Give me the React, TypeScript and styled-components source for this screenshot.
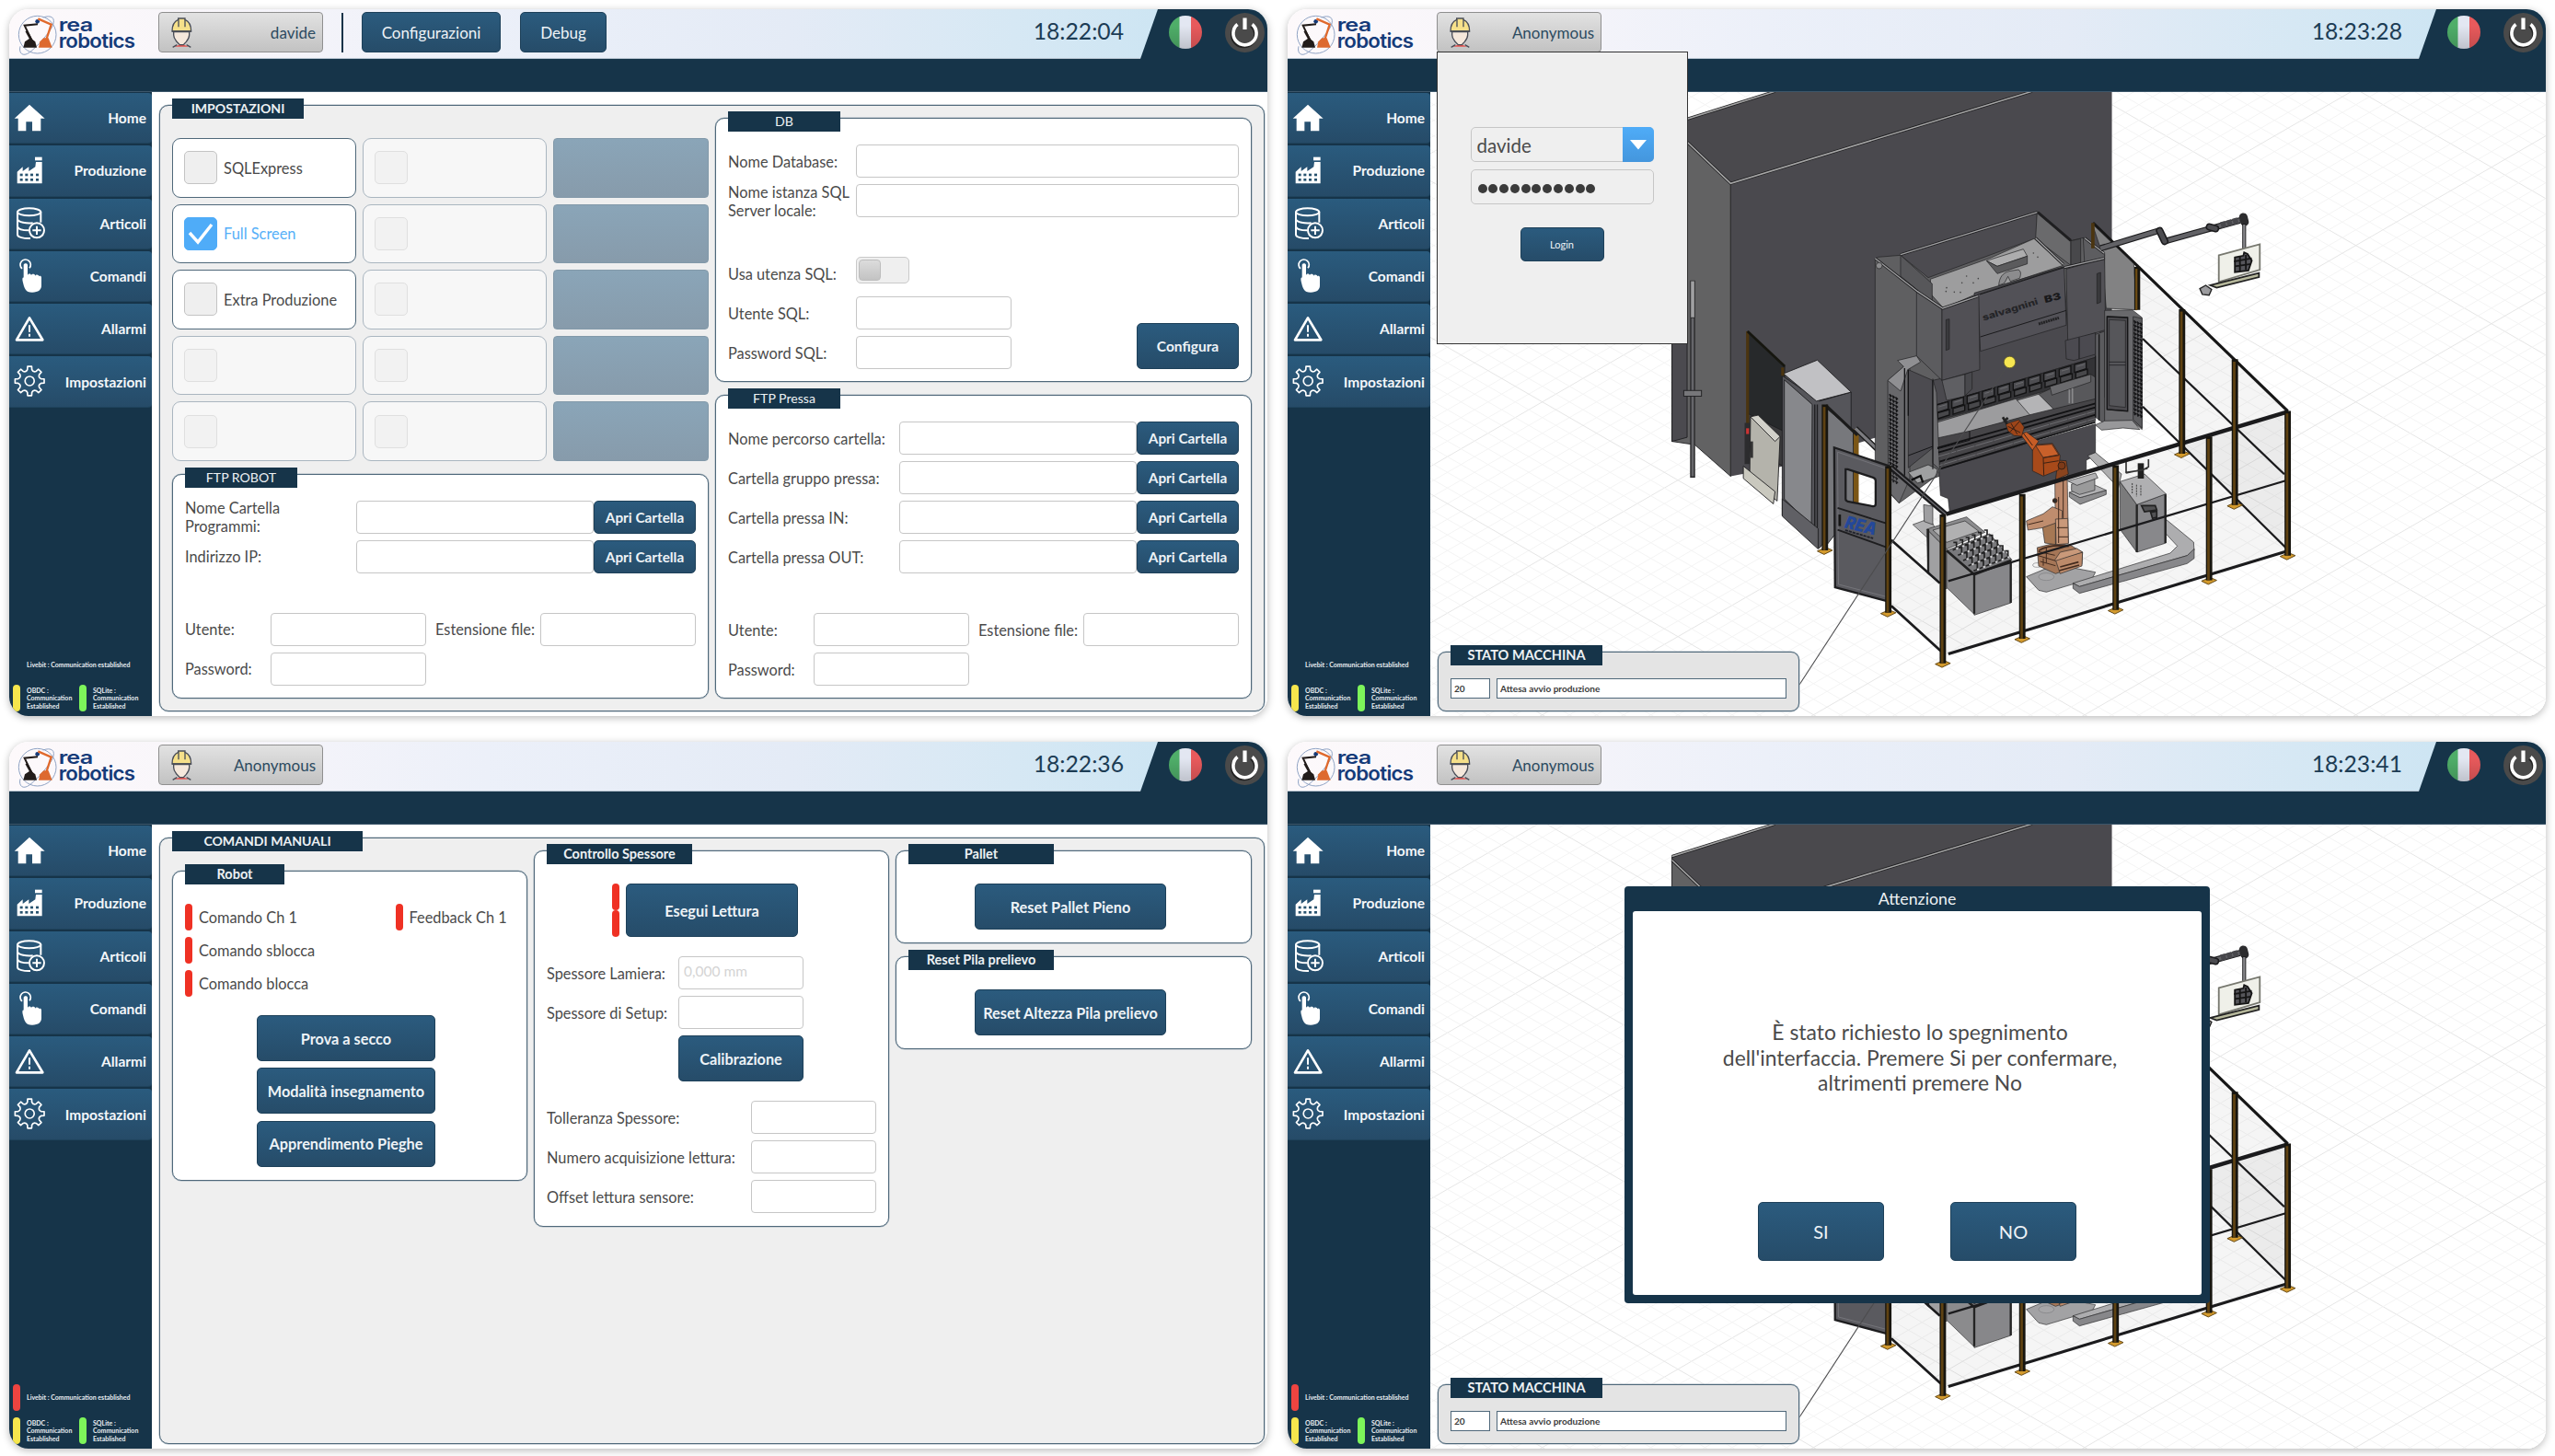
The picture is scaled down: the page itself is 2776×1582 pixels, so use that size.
import React from 'react';
import styled, { createGlobalStyle, css } from 'styled-components';

const GlobalStyle = createGlobalStyle`
  *, *::before, *::after { box-sizing: border-box; }
  body { margin: 0; background: #ffffff; }
`;

const navy = '#163449';
const line = '#4f687a';
const FONT = '"Lato", "Liberation Sans", sans-serif';

/* ---------- frame ---------- */

const Board = styled.main`
  width: 2776px;
  height: 1582px;
  padding: 10px;
  display: grid;
  grid-template-columns: 1367px 1367px;
  grid-template-rows: 768px 768px;
  gap: 28px 22px;
  font-family: ${FONT};
  color: #4a4a4a;
  background: #ffffff;
`;

const Screen = styled.section`
  position: relative;
  display: flex;
  flex-direction: column;
  border-radius: 21px;
  overflow: hidden;
  background: #ffffff;
`;

const Shadow = styled.div`
  display: flex;
  flex-direction: column;
  border-radius: 21px;
  box-shadow: 0 2px 9px rgba(0, 0, 0, 0.28);
  & > ${Screen} { flex: 1; }
`;

const Header = styled.header`
  height: 54px;
  flex: none;
  display: flex;
  align-items: flex-start;
  border-bottom: 1px solid #b9c6d2;
  background: linear-gradient(90deg, #fdf9fb 0%, #f7f5fa 18%, #ecf0f9 38%, #e4ebf6 62%, #d6e8f4 80%, #cde5f3 92%);
`;

const Band = styled.div`
  height: 36px;
  flex: none;
  background: ${navy};
  border-bottom: 1px solid #3c566a;
`;

const Body = styled.div`
  flex: 1;
  min-height: 0;
  display: flex;
`;

const LogoBox = styled.div`
  width: 162px;
  flex: none;
  padding: 4px 0 0 8px;
  & svg { display: block; }
`;

const UserButton = styled.button`
  width: 179px;
  height: 44px;
  flex: none;
  margin: 3px 0 0 0;
  padding: 0 7px 0 12px;
  display: flex;
  align-items: center;
  justify-content: space-between;
  border: 1px solid #8f8f8f;
  border-radius: 4px;
  background: linear-gradient(#e2e2e2, #c2c2c2);
  font: 400 17px ${FONT};
  color: #2c4a60;
`;

const Divider = styled.i`
  width: 2px;
  height: 43px;
  margin: 4px 20px 0 20px;
  background: ${navy};
`;

const Button = styled.button<{ $w?: number; $h?: number; $size?: number; $bold?: boolean }>`
  width: ${(p) => (p.$w ? `${p.$w}px` : '100%')};
  height: ${(p) => p.$h ?? 50}px;
  flex: none;
  padding: 0;
  border: 1px solid #1d4059;
  border-radius: 5px;
  background: linear-gradient(#2b5b7e, #264c69);
  color: #eef3f7;
  font: ${(p) => (p.$bold === false ? 400 : 700)} ${(p) => p.$size ?? 16.3}px ${FONT};
  white-space: nowrap;
`;

const HeaderActions = styled.div`
  display: flex;
  gap: 21px;
  padding-top: 3px;
`;

const Clock = styled.time`
  margin-left: auto;
  padding-right: 18px;
  font-size: 24.7px;
  line-height: 47px;
  color: #1c3c54;
`;

const Corner = styled.div`
  width: 138px;
  height: 54px;
  padding: 0 0 4px 31px;
  display: flex;
  align-items: center;
  gap: 25px;
  background: ${navy};
  clip-path: polygon(19px 0, 100% 0, 100% 100%, 0 100%);
`;

/* ---------- sidebar ---------- */

const Sidebar = styled.nav`
  width: 155px;
  flex: none;
  padding-top: 1px;
  display: flex;
  flex-direction: column;
  background: ${navy};
`;

const NavItem = styled.a`
  height: 55.3px;
  margin-bottom: 2px;
  padding: 0 6px 0 4px;
  display: flex;
  align-items: center;
  justify-content: space-between;
  border-radius: 0 4px 4px 0;
  border-bottom: 1px solid #1f435c;
  background: linear-gradient(#2a5b7e, #264b68);
  color: #f4f7fa;
  font-size: 15.5px;
  font-weight: 700;
  & svg { display: block; }
`;

const StatusArea = styled.div`
  margin-top: auto;
  padding: 0 0 5px 4px;
  display: grid;
  grid-template-columns: 72px 76px;
  grid-template-rows: 29px 29px;
  row-gap: 7px;
`;

const StatusCell = styled.div<{ $wide?: boolean }>`
  ${(p) => p.$wide && css`grid-column: 1 / 3;`}
  display: flex;
  align-items: center;
  gap: 7px;
  color: #e8edf1;
  font-size: 7px;
  font-weight: 700;
  line-height: 8.4px;
  white-space: pre;
`;

const Led = styled.i<{ $color: string; $h?: number }>`
  width: 8px;
  height: ${(p) => p.$h ?? 29}px;
  flex: none;
  border-radius: 4px;
  background: ${(p) => p.$color};
`;

/* ---------- panels ---------- */

const Page = styled.div`
  flex: 1;
  min-width: 0;
  padding: 14px 3px 5px 8px;
  display: flex;
`;

const Panel = styled.section<{ $main?: boolean; $bottom?: number }>`
  ${(p) => p.$main && css`flex: 1;`}
  border: 1px solid ${line};
  border-radius: 10px;
  padding: 0 13px ${(p) => p.$bottom ?? 14}px;
  background: ${(p) => (p.$main ? '#efefef' : '#ffffff')};
  box-shadow: 0 0 0 0.5px #a9b6c0;
`;

const Tag = styled.h2<{ $w: number; $bold?: boolean; $size?: number; $below?: number }>`
  width: ${(p) => p.$w}px;
  height: 22px;
  margin: -8px 0 ${(p) => p.$below ?? 14}px 0;
  font-size: ${(p) => p.$size ?? 14.1}px;
  font-weight: ${(p) => (p.$bold ? 700 : 400)};
  line-height: 22px;
  text-align: center;
  white-space: nowrap;
  color: #edf1f4;
  background: ${navy};
`;

const Columns = styled.div<{ $cols: string }>`
  display: grid;
  grid-template-columns: ${(p) => p.$cols};
  gap: 7px;
  align-items: start;
  margin-top: -15px;
`;

const Stack = styled.div<{ $gap?: number; $top?: number; $left?: number }>`
  display: flex;
  flex-direction: column;
  gap: ${(p) => p.$gap ?? 7}px;
  padding-top: ${(p) => p.$top ?? 0}px;
  padding-left: ${(p) => p.$left ?? 0}px;
`;

const Row = styled.div<{ $top?: number; $h?: number; $left?: number; $gap?: number }>`
  height: ${(p) => p.$h ?? 36}px;
  margin-top: ${(p) => p.$top ?? 0}px;
  padding-left: ${(p) => p.$left ?? 0}px;
  display: flex;
  align-items: center;
  gap: ${(p) => p.$gap ?? 0}px;
`;

const Label = styled.label<{ $w?: number; $inset?: number }>`
  ${(p) => p.$w && css`width: ${p.$w}px;`}
  flex: none;
  padding: 1px 0 0 ${(p) => p.$inset ?? 0}px;
  font-size: 16.35px;
  line-height: 20px;
  white-space: pre;
`;

const Field = styled.input<{ $w: number; $left?: number }>`
  width: ${(p) => p.$w}px;
  height: 36px;
  flex: none;
  margin: 0 0 0 ${(p) => p.$left ?? 0}px;
  padding: 0 5px 5px;
  border: 1.5px solid #c6c6c6;
  border-radius: 4px;
  background: #ffffff;
  font: 400 15.5px ${FONT};
  &::placeholder { color: #d4d4d4; opacity: 1; }
`;

const ConfigureSlot = styled.div`
  margin: -15px 0 0 136px;
`;

const Toggle = styled.span`
  width: 58px;
  height: 29px;
  margin-bottom: 7px;
  padding: 2px;
  border: 1.5px solid #c9c9c9;
  border-radius: 5px;
  background: #efefef;
  &::before {
    content: '';
    display: block;
    width: 24px;
    height: 23px;
    border: 1px solid #bdbdbd;
    border-radius: 4px;
    background: linear-gradient(#dcdcdc, #c3c3c3);
  }
`;

const OptionGrid = styled.div`
  display: grid;
  grid-template-columns: 200px 200px 169px;
  grid-template-rows: repeat(5, 64.6px);
  gap: 7px;
`;

const Option = styled.div<{ $off?: boolean; $checked?: boolean }>`
  display: flex;
  align-items: center;
  gap: 7px;
  padding-left: 12px;
  border: 1px solid ${(p) => (p.$off ? '#aab6c0' : line)};
  border-radius: 9px;
  background: ${(p) => (p.$off ? '#f7f7f7' : '#ffffff')};
  color: ${(p) => (p.$checked ? '#56aff8' : '#4a4a4a')};
  font-size: 16.4px;
`;

const CheckBox = styled.span<{ $checked?: boolean; $off?: boolean }>`
  width: 36px;
  height: 36px;
  display: grid;
  place-items: center;
  border: 1.5px solid ${(p) => (p.$checked ? '#4facf8' : p.$off ? '#dfdfdf' : '#c4c4c4')};
  border-radius: 5px;
  background: ${(p) => (p.$checked ? '#4facf8' : p.$off ? '#f2f2f2' : '#efefef')};
`;

const GhostButton = styled.div`
  border: 1px solid #8299a9;
  border-radius: 4px;
  background: linear-gradient(#8aa5b8, #879bab);
`;

/* ---------- cell view ---------- */

const Viewport = styled.div`
  position: relative;
  flex: 1;
  background: #ffffff;
  & > svg { display: block; }
`;

const StatePanel = styled.section`
  position: absolute;
  left: 8px;
  bottom: 5px;
  width: 393px;
  height: 65px;
  padding: 0 13px;
  border: 1px solid ${line};
  border-radius: 9px;
  background: #e4e4e4;
  box-shadow: 0 0 0 0.5px #a9b6c0;
`;

const StateValue = styled.span<{ $w: number }>`
  width: ${(p) => p.$w}px;
  height: 22px;
  padding-left: 3px;
  border: 1px solid ${line};
  background: #ffffff;
  color: #3c3c3c;
  font-size: 10.1px;
  font-weight: 700;
  line-height: 21px;
`;

const LoginPopup = styled.div`
  position: absolute;
  left: 162px;
  top: 46px;
  width: 273px;
  height: 318px;
  padding: 81px 37px 0 36px;
  display: flex;
  flex-direction: column;
  align-items: center;
  border: 1px solid #333333;
  background: #efefef;
`;

const Select = styled.div`
  width: 199px;
  height: 38px;
  display: flex;
  justify-content: space-between;
  border: 1.5px solid #c6c6c6;
  border-radius: 5px;
  padding-left: 6px;
  font-size: 20.5px;
  line-height: 38px;
`;

const SelectArrow = styled.span`
  width: 34px;
  height: 38px;
  margin: -1px -1px 0 0;
  display: grid;
  place-items: center;
  border-radius: 0 5px 5px 0;
  background: linear-gradient(#4facf8, #4496dd);
`;

const Password = styled.div`
  width: 199px;
  height: 38px;
  margin: 8px 0 25px;
  padding: 3px 0 0 7px;
  display: flex;
  align-items: center;
  gap: 1.8px;
  border: 1.5px solid #c6c6c6;
  border-radius: 5px;
`;

const Dot = styled.i`
  width: 10px;
  height: 10px;
  border-radius: 5px;
  background: #3b3b3b;
`;

const Dialog = styled.div`
  position: absolute;
  left: 366px;
  top: 157px;
  width: 636px;
  height: 453px;
  padding: 0 9px 9px;
  display: flex;
  flex-direction: column;
  border-radius: 4px;
  background: ${navy};
`;

const DialogTitle = styled.h3`
  height: 27px;
  margin: 0;
  font-size: 17.8px;
  font-weight: 400;
  line-height: 26px;
  text-align: center;
  color: #edf1f4;
`;

const DialogBody = styled.div`
  flex: 1;
  padding: 118px 0 0;
  display: flex;
  flex-direction: column;
  align-items: center;
  border-radius: 3px;
  background: #ffffff;
`;

const DialogText = styled.p`
  margin: 0 0 0 6px;
  height: 84px;
  font-size: 22.9px;
  line-height: 27.5px;
  text-align: center;
  white-space: pre;
`;

const DialogActions = styled.div`
  margin-top: 114px;
  display: flex;
  gap: 72px;
`;

/* ---------- drawings ---------- */

const Logo = () => (
  <svg width="130" height="46" viewBox="24 9 390 138">
    <g fill="none" stroke="#8fa3c4" strokeWidth="3">
      <ellipse cx="92" cy="80" rx="61" ry="61" />
      <path d="M110 24c28-10 42 2 32 26S88 122 66 138 30 140 36 118" />
    </g>
    <circle cx="92" cy="37" r="7" fill="#173b77" />
    <path d="M46 122l5-19 18-12 16 12 5 19z" fill="#221c1a" />
    <path d="M93 46L50 50l24 50" fill="none" stroke="#221c1a" strokeWidth="6" />
    <path d="M56 68l20 36" stroke="#221c1a" strokeWidth="8" />
    <path d="M96 122l4-19 12-12h16l12 31z" fill="#dd6a30" />
    <path d="M94 28l43 19-18 55" fill="none" stroke="#e0692c" strokeWidth="7" />
    <text x="161" y="68" fontFamily="Inter, sans-serif" fontWeight="600" fontSize="60" letterSpacing="-2" fill="#153b79" textLength="110" lengthAdjust="spacingAndGlyphs">rea</text>
    <text x="161" y="124" fontFamily="Inter, sans-serif" fontWeight="600" fontSize="64" letterSpacing="-2" fill="#153b79" textLength="248" lengthAdjust="spacingAndGlyphs">robotics</text>
  </svg>
);

const Worker = () => (
  <svg width="25" height="35" viewBox="525 22 75 105">
    <path d="M538 120l20-7h8l20 7z" fill="#e5534f" />
    <path d="M536 72v10c0 10 6 16 10 22l10 10h12l9-10c5-6 10-12 10-22V72z" fill="#f5e8dc" stroke="#494d57" strokeWidth="4" />
    <path d="M531 70c0-16 6-32 20-38V28h22v4c14 6 20 22 20 38z" fill="#f6e08a" stroke="#494d57" strokeWidth="4" />
    <path d="M552 32v24M573 32v24M531 70h63" stroke="#494d57" strokeWidth="4" fill="none" />
    <path d="M533 122l14-8M592 122l-14-8" stroke="#494d57" strokeWidth="4" />
  </svg>
);

const Flag = ({ id }: { id: string }) => (
  <svg width="36" height="36" viewBox="0 0 36 36">
    <defs>
      <clipPath id={id}><circle cx="18" cy="18" r="18" /></clipPath>
      <linearGradient id={`${id}s`} x1="0" y1="0" x2="0" y2="1">
        <stop offset="0.3" stopColor="#000" stopOpacity="0" />
        <stop offset="1" stopColor="#000" stopOpacity="0.16" />
      </linearGradient>
    </defs>
    <g clipPath={`url(#${id})`}>
      <rect width="12" height="36" fill="#4fae69" />
      <rect x="11.5" width="13" height="36" fill="#e3e7f2" />
      <rect x="24" width="12" height="36" fill="#e85a5c" />
      <rect width="36" height="36" fill={`url(#${id}s)`} />
    </g>
  </svg>
);

const Power = () => (
  <svg width="43" height="43" viewBox="0 0 43 43">
    <circle cx="21.5" cy="21.5" r="21.5" fill="#4a4a4a" />
    <path d="M13.5 12.5a12.6 12.6 0 1 0 16 0" fill="none" stroke="#222" strokeWidth="4" transform="translate(-1 1.5)" />
    <path d="M13.5 12.5a12.6 12.6 0 1 0 16 0" fill="none" stroke="#fff" strokeWidth="3.6" />
    <path d="M21.5 5.5v12.5" stroke="#fff" strokeWidth="4.2" />
  </svg>
);

const gearPath = (() => {
  const pts: string[] = [];
  for (let i = 0; i < 8; i++) {
    const at = (deg: number, r: number) => {
      const a = ((i * 45 + deg - 90) * Math.PI) / 180;
      return `${(67.6 + r * Math.cos(a)).toFixed(1)} ${(81 + r * Math.sin(a)).toFixed(1)}`;
    };
    pts.push(`${i ? 'L' : 'M'}${at(-8, 48)}L${at(8, 48)}L${at(11, 38)}Q${at(22.5, 30)} ${at(34, 38)}`);
  }
  return pts.join('') + 'Z';
})();

const icons: Record<string, React.ReactNode> = {
  Home: <path d="M67 38L18 83h12v41h26V94h20v30h28V83h13z" fill="#fff" />,
  Produzione: (
    <g>
      <path d="M27 124V86l18-16v14l20-14v14l21-14 2-16h20v70z" fill="#fff" />
      <rect x="85" y="38" width="23" height="11" fill="#fff" />
      <g fill="#28536f">
        {[36, 53, 70, 88].map((x) => [92, 108].map((y) => <rect key={`${x}-${y}`} x={x} y={y} width="9" height="8" />))}
      </g>
    </g>
  ),
  Articoli: (
    <g fill="none" stroke="#fff" strokeWidth="6">
      <ellipse cx="66" cy="46" rx="38" ry="12" />
      <path d="M28 46v74c0 8 20 13 42 12M104 46v34M28 70c2 10 30 14 50 12M28 94c3 8 20 12 36 12" />
      <circle cx="91" cy="106" r="24" />
      <path d="M91 92v28M77 106h28" />
    </g>
  ),
  Comandi: (
    <g>
      <path d="M43 60a17 17 0 1 1 24-2" fill="none" stroke="#fff" strokeWidth="5" />
      <path d="M48 48c0-7 13-7 13 0v34c0-7 12-7 12 0 1-6 12-6 13 1 2-6 12-4 12 2 3-3 8-1 8 4v26c0 14-10 22-30 22-22 0-26-14-31-36-2-9 0-14 3-12z" fill="#fff" />
    </g>
  ),
  Allarmi: (
    <g fill="none" stroke="#fff" strokeWidth="8" strokeLinejoin="round">
      <path d="M67 46L25 118h85z" />
      <path d="M67 70v22M67 98v9" strokeWidth="6" />
    </g>
  ),
  Impostazioni: (
    <g fill="none" stroke="#fff" strokeWidth="5" strokeLinejoin="round">
      <path d={gearPath} />
      <circle cx="67.6" cy="81" r="15" />
    </g>
  ),
};

/* Two families of parallel floor lines every 17px, every tenth one stronger. */
const FloorGrid = () => {
  const out: React.ReactNode[] = [];
  const s = 0.577;
  for (let i = -20; i < 160; i++) {
    const tone = i % 10 === 0 ? '#e6e6e6' : '#f4f4f4';
    const c = 1573.6 + 17 * (i - 60);
    const d = -360.2 + 17 * (i - 80);
    out.push(
      <path key={i} d={`M1554 ${c - s * 1554}L2766 ${c - s * 2766}M1554 ${d + s * 1554}L2766 ${d + s * 2766}`} stroke={tone} />,
    );
  }
  return <g strokeWidth="1">{out}</g>;
};

type Shape = [points: string, fill: string];
const Shapes = ({ items, w = 2 }: { items: Shape[]; w?: number }) => (
  <g stroke="#1f1f21" strokeWidth={w} strokeLinejoin="round">
    {items.map(([points, fill], i) => <polygon key={i} points={points} fill={fill} />)}
  </g>
);

const building: Shape[] = [
  ['36,167 280,88 890,88 175,312 36,176', '#4a494d'],
  ['36,176 175,312 175,1025 90,948 36,940', '#626263'],
  ['36,640 72,640 72,930 36,940', '#4b4a4f'],
];

const leftCabinets: Shape[] = [
  ['215,672 303,757 300,915 215,872', '#27292b'],
  ['215,872 300,915 300,1000 215,960', '#3c3c3e'],
  ['222,880 240,876 292,928 285,1085 220,1030', '#b4b3ab'],
  ['222,880 240,876 292,928 280,940', '#d2d1ca'],
  ['205,1000 280,1062 276,1092 205,1030', '#c9c8be'],
  ['297,780 385,842 460,820 460,1100 385,1200 297,1120', '#55555a'],
  ['302,790 368,850 366,1145 302,1080', '#87888c'],
  ['300,775 380,742 460,820 378,842', '#c1c1c4'],
  ['297,1080 382,1152 382,1202 297,1122', '#606065'],
  ['400,858 465,915 465,1110 400,1195', '#77787c'],
];

const press: Shape[] = [
  ['760,70 895,200 905,350 805,345 790,160', '#828283'],
  ['52,185 62,178 135,172 580,30 690,125 730,115 800,170 770,700 240,900 130,980 52,900', '#5f5f61'],
  ['135,172 580,32 580,115 225,245', '#4c4b50'],
  ['580,30 690,125 690,205 575,118', '#6a6a6c'],
  ['232,250 430,180 570,118 665,205 390,295 275,345 235,300', '#9d9d9e'],
  ['415,190 535,152 548,175 450,208', '#adadae'],
  ['415,190 450,208 548,175 548,200 450,232', '#5b5b5d'],
  ['135,172 238,265 238,325 135,240', '#57575a'],
  ['375,295 665,210 680,410 770,425 770,505 250,660 240,580 390,545', '#4a494e'],
  ['387,300 668,210 675,400 395,485', '#525157'],
  ['187,285 270,345 270,580 187,500', '#5c5c5f'],
  ['270,345 390,305 393,545 270,580', '#515055'],
  ['283,382 294,380 294,478 283,482', '#3a3a3d'],
  ['270,580 345,560 345,632 285,645', '#5f5f63'],
  ['345,560 368,552 368,608 345,630', '#48484c'],
  ['690,125 722,118 722,200 690,205', '#48484b'],
  ['730,115 800,165 800,185 735,205', '#5d5d60'],
  ['675,217 800,182 803,415 680,453', '#525156'],
  ['775,232 787,228 787,325 775,330', '#39393c'],
  ['672,450 770,425 770,495 700,515 675,510', '#4b4a50'],
  ['250,660 770,505 770,570 250,712', '#333336'],
];

const pressLower: Shape[] = [
  ['585,625 640,600 755,560 770,570 770,642 635,675', '#58585b'],
  ['622,600 755,560 755,585 628,628', '#6a6a6d'],
  ['250,718 510,640 565,692 255,775', '#9c9c9e'],
  ['515,645 585,625 635,675 560,697', '#b4b4b6'],
  ['245,770 360,745 565,690 770,640 770,712 265,868', '#464548'],
  ['260,870 770,722 770,825 740,840 740,875 295,1010 290,965 265,955', '#4a494e'],
  ['770,430 800,420 800,722 770,700', '#5b5b5e'],
  ['800,352 890,350 922,375 922,740 890,712 800,735', '#69696c'],
  ['893,372 922,378 922,735 893,708', '#5c5c5f'],
  ['808,372 875,375 875,680 808,675', '#4b4a4e'],
  ['815,382 868,385 868,668 815,662', '#56565a'],
  ['770,725 800,712 890,710 915,740 860,735 790,742', '#98989a'],
  ['93,580 145,535 165,540 165,900 130,980 95,940', '#68686b'],
  ['160,545 240,580 240,800 160,865', '#4c4b50'],
  ['240,575 252,620 262,870 240,850', '#6c6c6f'],
  ['125,515 187,500 200,520 158,545 135,615 93,580 145,535', '#8f8f92'],
  ['160,880 225,855 255,870 250,895 190,915', '#9fa0a1'],
];

const floorItems: Shape[] = [
  ['1165,165 1190,155 1275,225 1265,270', '#b0b0b1'],
  ['1105,285 1140,302 1225,278 1225,292 1140,324 1105,300', '#8e8e90'],
  ['1105,285 1190,262 1225,278 1140,302', '#b5b5b7'],
  ['1112,258 1188,240 1188,278 1138,292 1112,280', '#9b9b9d'],
  ['1100,248 1190,222 1198,238 1130,262', '#b5b5b7'],
  ['595,390 650,370 690,440 650,440', '#b3b3b5'],
  ['630,325 660,330 660,390 632,380', '#a0a0a2'],
  ['640,405 770,365 830,415 705,470', '#8c8c8e'],
  ['660,408 765,378 810,412 705,448', '#b4b4b5'],
  ['640,405 705,470 705,600 645,550', '#a2a2a4'],
  ['705,475 795,555 795,682 705,595', '#8b8b8d'],
  ['795,552 915,508 915,645 795,685', '#87878a'],
  ['705,475 845,420 918,505 795,552', '#77777a'],
  ['965,560 1060,520 1190,545 1180,565 1030,610 1005,604', '#a4a4a6'],
  ['1117,581 1434,483 1457,460 1420,420 1420,373 1510,447 1512,474 1489,491 1138,592', '#b0b0b2'],
  ['1117,581 1138,592 1489,491 1512,469 1512,500 1489,517 1138,614 1117,598', '#87878a'],
  ['1270,250 1325,325 1325,480 1270,405', '#79797b'],
  ['1325,325 1420,290 1420,450 1325,480', '#88888b'],
  ['1270,250 1350,225 1420,290 1325,325', '#b4b4b6'],
];

const robot: Shape[] = [
  ['1000,465 1060,450 1110,458 1148,480 1146,520 1060,550 1005,525', '#a87452'],
  ['1060,505 1148,480 1146,525 1075,550', '#c18a67'],
  ['1058,505 1075,480 1130,468 1148,480 1060,508', '#cf9a78'],
  ['1058,245 1098,225 1102,450 1060,455', '#c0896a'],
  ['965,378 1020,355 1050,332 1082,345 1080,390 1020,400 970,408', '#c48d6b'],
  ['1018,400 1060,385 1060,455 1025,450', '#a9764f'],
  ['1060,372 1100,370 1102,452 1062,455', '#cf9a78'],
  ['1068,180 1095,182 1102,225 1060,245', '#8b441e'],
  ['985,130 1050,125 1075,165 1070,212 1020,232 985,215', '#a84a1a'],
  ['995,132 1048,128 1070,162 1020,172', '#c9602a'],
  ['945,95 965,88 1005,118 985,148', '#c65c26'],
  ['898,62 940,48 958,72 950,102 925,100 905,85', '#9d4519'],
];

const Post = ({ x, y1, y2 }: { x: number; y1: number; y2: number }) => (
  <g>
    <path d={`M${x - 18} ${y2 + 2}l20-9 16 7-20 10z`} fill="#d39a2d" stroke="#5b4010" strokeWidth="2" />
    <path d={`M${x} ${y1}V${y2}`} stroke="#17150f" strokeWidth="15" />
    <path d={`M${x - 1.5} ${y1 + 6}V${y2}`} stroke="#5f4212" strokeWidth="6" />
  </g>
);

const perforation = (x: number, y: number, n: number, slant: number) => {
  let d = '';
  for (let i = 0; i < n; i++) {
    const px = x + (i % 3) * 10;
    const py = y + Math.floor(i / 3) * 13 + (i % 3) * slant;
    d += `M${px} ${py}l6 5-4 4`;
  }
  return d;
};

const toolSlots = Array.from({ length: 10 }, (_, i) => ({ x: 270 + i * 50, y: 652 - i * 14.6 }));
const studs = Array.from({ length: 30 }, (_, i) => ({
  x: 735 + (i % 6) * 20 + Math.floor(i / 6) * 17,
  y: 462 - (i % 6) * 8 + Math.floor(i / 6) * 17,
}));

const RobotCell = () => (
  <svg width="1212" height="678" viewBox="1554 100 1212 678">
    <FloorGrid />

    <g transform="translate(1800 60) scale(0.4592 0.4464)">
      <Shapes items={building} />
      <polygon points="175,312 890,88 1077,88 1077,830 520,930 300,1000 175,1025" fill="#4a494e" />
      <path d="M36 167L280 88M36 176L175 312 888 88" fill="none" stroke="#1f1f21" strokeWidth="7" />
      <path d="M36 167L280 88M36 176L175 312 888 88" fill="none" stroke="#a6a6a6" strokeWidth="3.5" />
      <path d="M175 315v710" stroke="#2b2b2d" strokeWidth="2" />
      <path d="M85 548v480" stroke="#29292b" strokeWidth="12" />
      <path d="M85 640v385" stroke="#66666a" strokeWidth="6" />
      <path d="M85 550v88" stroke="#a0a0a2" strokeWidth="8" />
      <rect x="64" y="816" width="42" height="14" fill="#77777a" stroke="#1f1f21" strokeWidth="2" />
      <Shapes items={leftCabinets} />
      <path d="M215 672v230M298 760v20" stroke="#4b3510" strokeWidth="7" />
      <path d="M215 672L303 757" stroke="#16160f" strokeWidth="6" />
      <path d="M214 895v100" stroke="#2c2c2e" strokeWidth="12" />
      <path d="M225 940v40" stroke="#333" strokeWidth="6" />
      <path d="M215 908v14" stroke="#c33" strokeWidth="7" />
      <path d="M380 850v300M374 850v295" stroke="#1f1f21" strokeWidth="3" />
      <path d="M472 910v190" stroke="#7b5616" strokeWidth="12" />
      <path d="M400 852L475 925" stroke="#1b1b1b" strokeWidth="7" />
      <path d="M470 908L553 990" stroke="#1b1b1b" strokeWidth="13" />
      <path d="M470 908L553 990" stroke="#7c7c80" strokeWidth="7" />
      <path d="M1032 408L1493 866" stroke="#161616" strokeWidth="7" />
    </g>

    <g transform="translate(2020 220) scale(0.33333)">
      <Shapes items={press} />
      <path d="M135 170L580 32M52 182L190 290 272 345 388 305M582 32l108 92M575 116l90 86M668 212l130-30M735 116l64 50" fill="none" stroke="#1f1f21" strokeWidth="9" />
      <path d="M135 170L580 32M52 182L190 290 272 345 388 305M575 116l90 86M668 212l130-30M735 116l64 50" fill="none" stroke="#a0a0a2" strokeWidth="4" />
      <circle cx="65" cy="206" r="10" fill="#8c8c8e" stroke="#1f1f21" strokeWidth="2" />
      <path d="M455 270c2-26 12-40 34-46l30-5c10 6 8 18 4 28l-30 10-8-16-12 22z" fill="#8c8c8e" stroke="#1f1f21" strokeWidth="2" />
      <g fill="#444">
        {[[285, 278], [283, 290], [310, 292], [335, 262], [350, 240], [372, 262], [388, 248], [330, 293], [568, 165], [582, 178]].map(([x, y]) => (
          <circle key={`${x}-${y}`} cx={x} cy={y} r="2.4" />
        ))}
      </g>
      <path d="M395 438L675 352M717 440v70M393 300l275-88" stroke="#1a1a1c" strokeWidth="3" />
      <text transform="translate(405 386) rotate(-17)" fontFamily="Inter, sans-serif" fontWeight="800" fontSize="29" fill="#242427" textLength="188" lengthAdjust="spacingAndGlyphs">salvagnini</text>
      <text transform="translate(606 328) rotate(-14)" fontFamily="Inter, sans-serif" fontWeight="900" fontSize="31" fill="#19191b" textLength="55" lengthAdjust="spacingAndGlyphs">B3</text>
      <path d="M585 396l66-20" stroke="#222224" strokeWidth="9" strokeDasharray="6 2" />
      {toolSlots.map(({ x, y }) => (
        <g key={x} transform={`translate(${x} ${y})`} stroke="#131314" strokeWidth="4">
          <path d="M-18 8l38-11v24l-38 12z" fill="#4d4d51" />
          <path d="M-14 34l38-11v18l-38 12z" fill="#48484b" />
          <path d="M-10 14l24-7" stroke="#78787b" strokeWidth="2" />
        </g>
      ))}
      <Shapes items={pressLower} />
      <g stroke="#121214" strokeWidth="5">
        <path d="M255 800L770 655M258 815L770 668M262 845L770 692M265 868L770 716" />
        <path d="M360 745v30l-105 28" fill="none" strokeWidth="3" />
      </g>
      <path d="M258 828L770 680M262 857L770 704" stroke="#6c6c70" strokeWidth="3" strokeDasharray="60 3" />
      <g fill="none" stroke="#141416" strokeWidth="5">
        <path d={perforation(895, 385, 72, 4)} />
        <path d={perforation(98, 625, 66, 5)} />
        <path d="M808 372l67 3v305l-67-5zM160 545v150M148 540v350M782 430v280" strokeWidth="4" />
        <path d="M160 825l80-30M240 580v290M770 500v200" strokeWidth="3" />
        <path d="M815 520h53M815 530h53" strokeWidth="2" />
      </g>
      <path d="M170 905l30-14 8 22" fill="none" stroke="#111" strokeWidth="7" />
      <path d="M685 610v45M695 605v50" stroke="#8a8a8c" strokeWidth="5" />
    </g>

    <g transform="translate(1880 440) scale(0.33333)">
      <Shapes items={floorItems} />
      <path d="M1338 190v50" stroke="#151515" strokeWidth="20" />
      <path d="M1290 180v40l55-8 18-10v-25M1290 222l70-15" fill="none" stroke="#2a2a2a" strokeWidth="5" />
      <path d="M1310 255v35M1324 260v38M1338 262v35" stroke="#333" strokeWidth="3" strokeDasharray="6 3" />
      <path d="M1340 328l45 0 5 14-40 6zM1370 350l20-4v20l-14 4z" fill="#4b4b4d" stroke="#151515" strokeWidth="5" />
      <path d="M1325 325v155M1418 292v158M645 405v145M795 555v125M914 510v135" stroke="#1a1a1a" strokeWidth="7" />
      <path d="M705 475l90 78 120-46" fill="none" stroke="#151515" strokeWidth="8" />
      {studs.map(({ x, y }, i) => (
        <g key={i}>
          <path d={`M${x - 8} ${y - 14}h10v20l-12 5`} fill="none" stroke="#161617" strokeWidth="5" />
          <circle cx={x + 4} cy={y + 6} r="3.5" fill="#d8d8da" />
        </g>
      ))}
      <g fill="none" stroke="#7d7d80" strokeWidth="2">
        <ellipse cx="1030" cy="560" rx="25" ry="12" fill="#a9a9ab" />
        <ellipse cx="1000" cy="522" rx="14" ry="7" />
      </g>
      <Shapes items={robot} />
      <g stroke="#3a2013" strokeWidth="3" fill="none">
        <path d="M1020 172l2 58M1020 172l52-8M1020 190l50-8M1070 300v150M1085 240v130M1000 490l60 18M1010 510l50 14M970 390l50-12M1065 400h35M1068 430h33M905 70l40 20M915 60l20 35M955 92l30 40M912 88l30-34M1004 478l54 12M1020 500v24M1030 465v50" />
        <path d="M1072 540l65-18M1075 528l60-16" strokeWidth="5" />
        <path d="M1005 475q35-22 98-14" strokeWidth="5" />
        <circle cx="1080" cy="198" r="12" fill="#7d3a18" />
        <circle cx="1058" cy="312" r="7" fill="#222" />
      </g>
      <path d="M888 40l14 22M905 42l-14 12" stroke="#222" strokeWidth="8" />
    </g>

    <g transform="translate(1800 60) scale(0.4592 0.4464)">
      <g fill="#8d8d94" fillOpacity="0.09">
        <polygon points="550,1000 677,1115 677,1460 555,1340" />
        <polygon points="677,1115 1493,868 1493,1208 677,1460" />
        <polygon points="1145,530 1493,868 1493,1200 1150,855" />
      </g>
      <g fill="none" stroke="#1b1b1d">
        <path d="M1150 690L1485 1020M1150 855L1490 1200M690 1280L1490 1035" strokeWidth="5" />
        <path d="M555 1180L670 1285M555 1340L672 1450" strokeWidth="6" />
        <path d="M553 1002L685 1118" strokeWidth="13" />
        <path d="M553 1002L685 1118" stroke="#6a6a6e" strokeWidth="3" />
        <path d="M685 1117L1495 867" strokeWidth="10" />
        <path d="M690 1457L1492 1207" strokeWidth="7" />
        <path d="M1050 470L1188 427M1205 452L1380 402" strokeWidth="15" />
        <path d="M1050 470L1188 427M1205 452L1380 402" stroke="#626266" strokeWidth="10" />
        <path d="M1190 427l12 26M1308 418l14 4" strokeWidth="18" strokeLinecap="round" />
        <path d="M1190 427l12 26M1308 418l14 4" stroke="#4c4c50" strokeWidth="11" strokeLinecap="round" />
        <path d="M1335 414l44-13" stroke="#47474b" strokeWidth="15" strokeDasharray="12 3" />
        <path d="M1388 394l3 12" stroke="#2c2c2e" strokeWidth="20" strokeLinecap="round" />
        <path d="M1390 410v82" strokeWidth="9" />
        <path d="M1390 412v70" stroke="#87878b" strokeWidth="5" />
      </g>
      <polygon points="1330,487 1427,460 1427,522 1330,552" fill="#eff0e9" stroke="#77786f" strokeWidth="4" />
      <path d="M1368 492l20-4 2-8 8 4 10 16-8 24-32 4z" fill="#55555a" stroke="#151515" strokeWidth="4" />
      <path d="M1366 502l42-8M1368 514l38-6M1380 490v36M1394 486v36" stroke="#151515" strokeWidth="4" />
      <path d="M1310 560l115-30v10l-100 26z" fill="#b7b99c" stroke="#222" strokeWidth="4" />
      <path d="M1285 568l14-8 14 10-6 14-16-2z" fill="#9b9b9e" stroke="#222" strokeWidth="3" />

      <path d="M1032 408V470" stroke="#4b3510" strokeWidth="8" />
      <path d="M1137 515V620" stroke="#17150f" strokeWidth="14" />
      <path d="M1135 520V620" stroke="#6d4c14" strokeWidth="5" />
      <Post x={398} y1={850} y2={1205} />
      <Post x={1243} y1={618} y2={970} />
      <Post x={1368} y1={740} y2={1095} />

      <path d="M420 955L550 1000V1330L422 1295zM447 1008V1080q0 5 5 6l60 12q6 0 6-6V1036q0-6-6-8l-60-20q-5 0-5 0z" fill="#5a5a5f" fillRule="evenodd" stroke="#1d1d1f" strokeWidth="5" />
      <path d="M428 966L543 1006V1318L430 1288z" fill="none" stroke="#77777c" strokeWidth="2" />
      <path d="M428 1102L545 1140M428 1155L545 1198" stroke="#1d1d1f" strokeWidth="4" />
      <path d="M433 1118v28" stroke="#151515" strokeWidth="6" />
      <text transform="translate(443 1150) rotate(14)" fontFamily="Inter, sans-serif" fontStyle="italic" fontWeight="900" fontSize="42" fill="#24489a" textLength="76" lengthAdjust="spacingAndGlyphs">REA</text>
      <path d="M446 1156l66 20" stroke="#20222b" strokeWidth="4" strokeDasharray="7 2" />

      <Post x={548} y1={1000} y2={1357} />
      <Post x={677} y1={1118} y2={1480} />
      <Post x={865} y1={1068} y2={1420} />
      <Post x={1086} y1={998} y2={1350} />
      <Post x={1307} y1={928} y2={1278} />
      <Post x={1493} y1={866} y2={1218} />
    </g>

    <path d="M1955 744L2183.5 393.5" stroke="#4c4c4e" strokeWidth="1.1" />
    <circle cx="2183.5" cy="393.5" r="6.3" fill="#f7e651" stroke="#5c5726" strokeWidth="0.8" />
  </svg>
);

/* ---------- composed parts ---------- */

interface ShellProps {
  id: string;
  user: string;
  time: string;
  admin?: boolean;
  livebit?: boolean;
  overlay?: React.ReactNode;
  children: React.ReactNode;
}

const Shell = ({ id, user, time, admin, livebit, overlay, children }: ShellProps) => (
  <Shadow>
    <Screen>
      <Header>
        <LogoBox><Logo /></LogoBox>
        <UserButton><Worker />{user}</UserButton>
        {admin && (
          <>
            <Divider />
            <HeaderActions>
              <Button $w={151} $h={44} $size={17} $bold={false}>Configurazioni</Button>
              <Button $w={94} $h={44} $size={17} $bold={false}>Debug</Button>
            </HeaderActions>
          </>
        )}
        <Clock>{time}</Clock>
        <Corner><Flag id={id} /><Power /></Corner>
      </Header>
      <Band />
      <Body>
        <Sidebar>
          {Object.keys(icons).map((name) => (
            <NavItem key={name}>
              <svg width="36" height="43.3" viewBox="13 18 108 130">{icons[name]}</svg>
              {name}
            </NavItem>
          ))}
          <StatusArea>
            <StatusCell $wide>
              <Led $color={livebit ? '#ee4440' : 'transparent'} />Livebit : Communication established
            </StatusCell>
            <StatusCell><Led $color="#f6e64d" />{'OBDC :\nCommunication\nEstablished'}</StatusCell>
            <StatusCell><Led $color="#7df55a" />{'SQLite :\nCommunication\nEstablished'}</StatusCell>
          </StatusArea>
        </Sidebar>
        {children}
      </Body>
      {overlay}
    </Screen>
  </Shadow>
);

const FolderRow = ({ label }: { label: string }) => (
  <Row>
    <Label $w={186}>{label}</Label>
    <Field $w={258} />
    <Button $w={111} $h={36} $size={15.3}>Apri Cartella</Button>
  </Row>
);

const AccountRows = () => (
  <>
    <Row $top={36}>
      <Label $w={93}>Utente:</Label>
      <Field $w={169} />
      <Label $w={114} $inset={10}>Estensione file:</Label>
      <Field $w={169} $left={10} />
    </Row>
    <Row><Label $w={93}>Password:</Label><Field $w={169} /></Row>
  </>
);

const options = ['SQLExpress', 'Full Screen', 'Extra Produzione', '', ''];

const Settings = () => (
  <Page>
    <Panel $main>
      <Tag $w={143} $bold>IMPOSTAZIONI</Tag>
      <Columns $cols="583px 583px">
        <Stack $gap={14} $top={22}>
          <OptionGrid>
            {options.map((name, i) => {
              const checked = name === 'Full Screen';
              return (
                <React.Fragment key={i}>
                  <Option $off={!name} $checked={checked}>
                    <CheckBox $off={!name} $checked={checked}>
                      {checked && (
                        <svg width="28" height="24" viewBox="0 0 28 24">
                          <path d="M2 11l9 10L26 2" fill="none" stroke="#fff" strokeWidth="3.4" />
                        </svg>
                      )}
                    </CheckBox>
                    {name}
                  </Option>
                  <Option $off><CheckBox $off /></Option>
                  <GhostButton />
                </React.Fragment>
              );
            })}
          </OptionGrid>
          <Panel $bottom={13}>
            <Tag $w={122}>FTP ROBOT</Tag>
            <Stack>
              <FolderRow label={'Nome Cartella\nProgrammi:'} />
              <FolderRow label="Indirizzo IP:" />
              <AccountRows />
            </Stack>
          </Panel>
        </Stack>
        <Stack $gap={14}>
          <Panel $bottom={13}>
            <Tag $w={122}>DB</Tag>
            <Stack>
              <Row><Label $w={139}>Nome Database:</Label><Field $w={416} /></Row>
              <Row><Label $w={139}>{'Nome istanza SQL\nServer locale:'}</Label><Field $w={416} /></Row>
              <Row $top={36}><Label $w={139}>Usa utenza SQL:</Label><Toggle /></Row>
              <Row><Label $w={139}>Utente SQL:</Label><Field $w={169} /></Row>
              <Row>
                <Label $w={139}>Password SQL:</Label>
                <Field $w={169} />
                <ConfigureSlot><Button $w={111} $h={50} $size={15.5}>Configura</Button></ConfigureSlot>
              </Row>
            </Stack>
          </Panel>
          <Panel $bottom={13}>
            <Tag $w={122}>FTP Pressa</Tag>
            <Stack>
              <FolderRow label="Nome percorso cartella:" />
              <FolderRow label="Cartella gruppo pressa:" />
              <FolderRow label="Cartella pressa IN:" />
              <FolderRow label="Cartella pressa OUT:" />
              <AccountRows />
            </Stack>
          </Panel>
        </Stack>
      </Columns>
    </Panel>
  </Page>
);

const RED = '#ef3124';

const Manual = () => (
  <Page>
    <Panel $main>
      <Tag $w={207} $bold>COMANDI MANUALI</Tag>
      <Columns $cols="386px 386px 387px">
        <Stack $top={22}>
          <Panel>
            <Tag $w={108} $bold $size={14.5} $below={21}>Robot</Tag>
            <Stack>
              <Row $h={29} $gap={7}>
                <Led $color={RED} /><Label $w={206.5}>Comando Ch 1</Label>
                <Led $color={RED} /><Label>Feedback Ch 1</Label>
              </Row>
              <Row $h={29} $gap={7}><Led $color={RED} /><Label>Comando sblocca</Label></Row>
              <Row $h={29} $gap={7}><Led $color={RED} /><Label>Comando blocca</Label></Row>
            </Stack>
            <Stack $gap={7.3} $top={20} $left={78}>
              <Button $w={194}>Prova a secco</Button>
              <Button $w={194}>Modalità insegnamento</Button>
              <Button $w={194}>Apprendimento Pieghe</Button>
            </Stack>
          </Panel>
        </Stack>
        <Panel>
          <Tag $w={158} $bold $size={14.5} $below={21}>Controllo Spessore</Tag>
          <Row $h={58} $left={71} $gap={7}>
            <Stack $gap={0}><Led $color={RED} /><Led $color={RED} /></Stack>
            <Button $w={187} $h={58}>Esegui Lettura</Button>
          </Row>
          <Stack $top={21}>
            <Row><Label $w={143}>Spessore Lamiera:</Label><Field $w={136} placeholder="0,000 mm" /></Row>
            <Row><Label $w={143}>Spessore di Setup:</Label><Field $w={136} /></Row>
            <Row $h={50} $left={143}><Button $w={136}>Calibrazione</Button></Row>
            <Row $top={14}><Label $w={222}>Tolleranza Spessore:</Label><Field $w={136} /></Row>
            <Row><Label $w={222}>Numero acquisizione lettura:</Label><Field $w={136} /></Row>
            <Row><Label $w={222}>Offset lettura sensore:</Label><Field $w={136} /></Row>
          </Stack>
        </Panel>
        <Stack $gap={14}>
          <Panel>
            <Tag $w={158} $bold $size={14.5} $below={21}>Pallet</Tag>
            <Row $h={50} $left={72}><Button $w={208}>Reset Pallet Pieno</Button></Row>
          </Panel>
          <Panel>
            <Tag $w={158} $bold $size={14.5} $below={21}>Reset Pila prelievo</Tag>
            <Row $h={50} $left={72}><Button $w={208}>Reset Altezza Pila prelievo</Button></Row>
          </Panel>
        </Stack>
      </Columns>
    </Panel>
  </Page>
);

const CellView = () => (
  <Viewport>
    <RobotCell />
    <StatePanel>
      <Tag $w={165} $bold $size={14.6}>STATO MACCHINA</Tag>
      <Row $h={22} $gap={7}>
        <StateValue $w={43}>20</StateValue>
        <StateValue $w={315}>Attesa avvio produzione</StateValue>
      </Row>
    </StatePanel>
  </Viewport>
);

const Login = () => (
  <LoginPopup>
    <Select>
      davide
      <SelectArrow>
        <svg width="20" height="11" viewBox="0 0 20 11"><path d="M1 0h18l-9 10.5z" fill="#fff" /></svg>
      </SelectArrow>
    </Select>
    <Password>{Array.from({ length: 11 }, (_, i) => <Dot key={i} />)}</Password>
    <Button $w={91} $h={37} $size={11} $bold={false}>Login</Button>
  </LoginPopup>
);

const Shutdown = () => (
  <Dialog>
    <DialogTitle>Attenzione</DialogTitle>
    <DialogBody>
      <DialogText>{"È stato richiesto lo spegnimento\ndell'interfaccia. Premere Si per confermare,\naltrimenti premere No"}</DialogText>
      <DialogActions>
        <Button $w={137} $h={64} $size={20} $bold={false}>SI</Button>
        <Button $w={137} $h={64} $size={20} $bold={false}>NO</Button>
      </DialogActions>
    </DialogBody>
  </Dialog>
);

export default function App() {
  return (
    <>
      <GlobalStyle />
      <Board>
        <Shell id="flag-a" user="davide" time="18:22:04" admin><Settings /></Shell>
        <Shell id="flag-b" user="Anonymous" time="18:23:28" overlay={<Login />}><CellView /></Shell>
        <Shell id="flag-c" user="Anonymous" time="18:22:36" livebit><Manual /></Shell>
        <Shell id="flag-d" user="Anonymous" time="18:23:41" livebit overlay={<Shutdown />}><CellView /></Shell>
      </Board>
    </>
  );
}
